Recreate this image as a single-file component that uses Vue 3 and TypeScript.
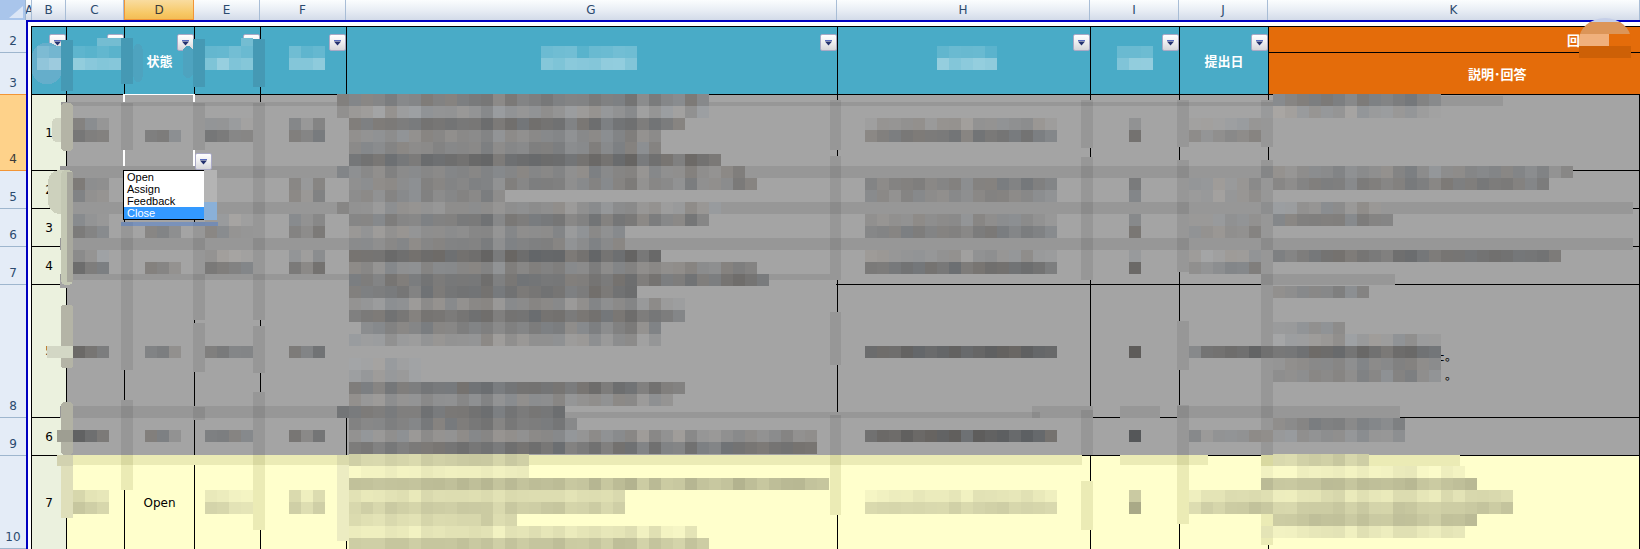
<script setup lang="ts">
interface Shape { x: number; y: number; w: number; h: number; fill: string; rx?: number }

const colLetters = ['A', 'B', 'C', 'D', 'E', 'F', 'G', 'H', 'I', 'J', 'K']
const rowLabels = ['2', '3', '4', '5', '6', '7', '8', '9', '10']
const headers = ['', '', '状態', '', '', '', '', '', '提出日']
const statusOptions = ['Open', 'Assign', 'Feedback', 'Close']
const rows = ['1', '2', '3', '4', '5', '6', '7']
const dataCols = [1, 2, 3, 4, 5, 6, 7, 8, 9]

const shapes: Shape[] = []
const GRAY = '#a4a4a4'
const YELLOW = '#ffffcc'

function hash(a: number, b: number): number {
  const s = Math.sin(a * 12.9898 + b * 78.233) * 43758.5453
  return s - Math.floor(s)
}
function add(x: number, y: number, w: number, h: number, fill: string, rx?: number) {
  shapes.push({ x, y, w, h, fill, rx })
}
// one smear: an opaque cover that hides the grid lines, then a tint on top
function smearCover(x: number, w: number, y0: number, y1: number) {
  if (y0 < 455) add(x, y0, w, Math.min(y1, 455) - y0, GRAY)
  if (y1 > 455) add(x, Math.max(y0, 455), w, y1 - Math.max(y0, 455), YELLOW)
}
function smearTint(x: number, w: number, y0: number, y1: number) {
  if (y0 < 455) add(x, y0, w, Math.min(y1, 455) - y0, 'rgba(0,0,0,.08)')
  if (y1 > 455) add(x, Math.max(y0, 455), w, y1 - Math.max(y0, 455), 'rgba(70,70,0,.11)')
}

const bands: [number, number, number, number][] = [
  [61, 1212, 102, 106], [1273, 230, 96, 106],
  [60, 1510, 166, 178], [66, 1567, 202, 214], [60, 1573, 238, 250],
  [60, 770, 274, 280], [1261, 134, 274, 285],
  [60, 280, 406, 418], [340, 700, 412, 418], [1032, 61, 406, 418],
  [1120, 40, 406, 418], [1177, 223, 406, 418],
  [57, 1025, 455, 465], [1120, 88, 455, 465], [1261, 199, 455, 466],
]
const bars: [number, number, number, number][] = [
  [121, 12, 103, 150], [121, 12, 222, 370], [121, 12, 400, 490],
  [193, 12, 103, 150], [193, 12, 222, 320], [193, 12, 323, 372], [193, 12, 407, 420],
  [253, 12, 103, 320], [253, 12, 326, 373], [253, 12, 392, 530],
  [830, 11, 100, 150], [830, 11, 156, 280], [830, 11, 312, 365], [830, 11, 415, 515],
  [1081, 12, 100, 148], [1081, 12, 157, 280], [1081, 12, 410, 455], [1081, 12, 481, 530],
  [1177, 12, 100, 147], [1177, 12, 160, 272], [1177, 12, 321, 370], [1177, 12, 405, 524],
  [1261, 12, 100, 147], [1261, 12, 160, 545],
]

// hide the grid lines under the large smeared areas
add(326, 95, 510, 189, GRAY)
add(326, 284, 510, 126, GRAY)
add(60, 280, 677, 8, GRAY)
bands.forEach(([x, w, a, b]) => smearCover(x, w, a, b))
bars.forEach(([x, w, a, b]) => smearCover(x, w, a, b))
add(337, 455, 12, 86, '#ececc2')
bands.forEach(([x, w, a, b]) => smearTint(x, w, a, b))
bars.forEach(([x, w, a, b]) => smearTint(x, w, a, b))

// pale rounded blobs over the row-number column
add(48, 170, 25, 44, '#cdd1bd', 12)
add(61, 170, 12, 115, '#c4c8b4', 5)
add(67, 172, 6, 110, '#a8a89e')
add(52, 118, 21, 24, '#d2d6c4', 5)
add(67, 118, 6, 24, '#a8a89e')
add(61, 103, 12, 48, '#b4b4a6', 4)
add(61, 305, 12, 63, '#b4b4a6', 3)
add(47, 346, 26, 12, '#d3d7c5')
add(61, 402, 12, 53, '#b2b2a4', 4)
add(57, 430, 16, 12, '#9e9e92')
add(61, 455, 12, 63, '#dfdfba')
add(57, 455, 16, 11, '#d2d2b0')

type Run = [number, number, number, number]
const runs: Run[] = []
const column = (x0: number, x1: number, list: [number, number][]) =>
  list.forEach(([y, v]) => runs.push([y, x0, x1, v]))

column(73, 109, [[118, 144], [130, 124], [178, 136], [190, 144], [214, 144], [226, 128], [250, 150], [262, 120], [346, 118], [430, 112], [490, 224], [502, 207]])
column(145, 181, [[130, 135], [226, 138], [262, 136], [346, 133], [430, 133]])
column(205, 253, [[118, 152], [130, 128], [214, 154], [226, 142], [250, 156], [262, 128], [346, 128], [430, 128], [490, 236], [502, 218]])
column(289, 325, [[118, 140], [130, 128], [178, 140], [190, 140], [214, 142], [226, 134], [250, 148], [262, 125], [346, 124], [430, 124], [490, 226], [502, 212]])
column(865, 1057, [[118, 150], [130, 127], [178, 133], [190, 140], [214, 144], [226, 132], [250, 152], [262, 120], [346, 104], [430, 104], [490, 236], [502, 216]])
column(1129, 1141, [[118, 136], [130, 112], [178, 120], [190, 128], [214, 136], [226, 112], [250, 144], [262, 96], [346, 85], [430, 85], [490, 200], [502, 168]])
column(1189, 1261, [[118, 154], [130, 138], [178, 150], [190, 150], [214, 150], [226, 144], [250, 154], [262, 138], [346, 133], [430, 133], [490, 232], [502, 214]])

// description column G, line by line
const g: Run[] = [
  [94, 337, 709, 130], [106, 337, 709, 152], [118, 349, 685, 120], [130, 349, 661, 140], [142, 349, 661, 136],
  [154, 349, 721, 114], [166, 337, 745, 136], [178, 349, 757, 136], [190, 349, 505, 136], [202, 337, 721, 146],
  [214, 349, 709, 128], [226, 349, 625, 144], [238, 349, 625, 136], [250, 349, 661, 112], [262, 349, 757, 136],
  [274, 349, 769, 120], [286, 349, 637, 120], [298, 349, 685, 144], [310, 349, 685, 120], [322, 361, 661, 133],
  [334, 349, 661, 150], [358, 349, 421, 156], [370, 349, 421, 152], [382, 349, 685, 120], [394, 349, 673, 144],
  [406, 337, 565, 120], [418, 349, 577, 128], [430, 349, 817, 144], [442, 349, 817, 120],
  [454, 349, 529, 208], [466, 349, 529, 240], [478, 349, 829, 192], [490, 349, 625, 224], [502, 349, 625, 208],
  [514, 349, 517, 216], [526, 349, 697, 232], [538, 349, 709, 200],
]
// answer column K, line by line
const k: Run[] = [
  [94, 1273, 1441, 128], [106, 1261, 1441, 154], [166, 1261, 1570, 138], [178, 1273, 1549, 128], [202, 1261, 1381, 146],
  [214, 1273, 1393, 128], [250, 1273, 1561, 120], [286, 1273, 1369, 136], [322, 1273, 1345, 148], [334, 1273, 1441, 152],
  [346, 1201, 1441, 112], [358, 1273, 1441, 136], [370, 1273, 1441, 136], [418, 1273, 1405, 130], [430, 1201, 1405, 144],
  [454, 1273, 1369, 208], [466, 1261, 1465, 240], [478, 1261, 1477, 192], [490, 1201, 1513, 224], [502, 1201, 1513, 204],
  [514, 1273, 1477, 196], [526, 1261, 1465, 232],
]
runs.push(...g, ...k)

runs.forEach(([y, x0, x1, v]) => {
  for (let x = x0; x < x1; x += 12) {
    const j = (hash(x, 1) - 0.5) * 20 + (hash(x, y) - 0.5) * 10
    const n = Math.max(0, Math.min(255, Math.round(v + j)))
    const tint = Math.round((hash(y, x) - 0.5) * 6)
    const fill = y >= 454
      ? `rgb(${n},${n},${Math.round(n * 0.8)})`
      : `rgb(${n + tint},${n},${n - tint})`
    add(x, y, 12, 12, fill)
  }
})

// smear bleeding out under the list
add(121, 222, 97, 4, 'rgba(60,120,220,.4)')

// header: smears and mosaics over the teal
add(32, 43, 30, 41, '#65aecb', 14)
add(61, 40, 12, 51, '#4599b4')
add(121, 38, 12, 46, '#4599b4')
add(133, 44, 10, 38, '#4ea3bf', 8)
add(193, 39, 12, 48, '#4599b4')
add(183, 46, 10, 32, '#4ea3bf', 6)
add(253, 39, 12, 48, '#4599b4')
const headerMosaic: [number, number][] = [[73, 121], [205, 253], [289, 325], [541, 637], [937, 997], [1117, 1153]]
headerMosaic.forEach(([x0, x1]) => {
  ;[46, 58].forEach((y) => {
    for (let x = x0; x < x1; x += 12) {
      const m = (y === 46 ? 0.16 : 0.36) + (hash(x, y) - 0.5) * 0.14
      const c = (b: number) => Math.round(b + (255 - b) * m)
      add(x, y, 12, 12, `rgb(${c(0x49)},${c(0xab)},${c(0xc7)})`)
    }
  })
})
;[[97, 121], [241, 253]].forEach(([x0, x1]) => {
  for (let x = x0; x < x1; x += 12) add(x, 38, 12, 8, '#74bdd2')
})
;[46, 58].forEach((y) => {
  for (let x = 37; x < 61; x += 12) {
    const m = (y === 46 ? 0.12 : 0.32) + (hash(x, y) - 0.5) * 0.1
    const c = (b: number) => Math.round(b + (255 - b) * m)
    add(x, y, 12, 12, `rgb(${c(0x65)},${c(0xae)},${c(0xcb)})`)
  }
})
</script>

<template>
  <div class="sheet">
    <div class="col-head">
      <div class="corner"><span class="corner-tri"></span></div>
      <div v-for="c in colLetters" :key="c" class="col-label" :class="{ active: c === 'D', narrow: c === 'A' }">{{ c }}</div>
    </div>

    <div class="body">
      <div class="row-head">
        <div v-for="r in rowLabels" :key="r" class="row-label" :class="{ active: r === '4' }">{{ r }}</div>
      </div>

      <div class="canvas">
        <div class="table">
          <div v-for="(h, i) in headers" :key="'h' + i" class="th">
            <span>{{ h }}</span>
            <button class="filter" type="button" aria-label="filter">
              <svg width="9" height="6" viewBox="0 0 9 6"><path d="M1 0h7v1H1z" fill="#5a6cc0" /><path d="M1 1.5h7L4.5 5.5z" fill="#23306e" /></svg>
            </button>
          </div>
          <div class="th-k top"><span>回答</span></div>
          <div class="th-k bottom"><span>説明･回答</span></div>

          <template v-for="r in rows" :key="r">
            <div class="td num">{{ r }}</div>
            <div
              v-for="c in dataCols"
              :key="r + '-' + c"
              class="td"
              :class="{ closed: r !== '7', open: r === '7', selected: r === '1' && c === 2 }"
            >
              <template v-if="r === '7' && c === 2">Open</template>
              <span v-if="r === '5' && c === 9" class="answer-tail">た。<br />　。</span>
              <template v-if="r === '1' && c === 2">
                <button class="filter cell-filter" type="button" aria-label="open list">
                  <svg width="9" height="6" viewBox="0 0 9 6"><path d="M1 0h7v1H1z" fill="#5a6cc0" /><path d="M1 1.5h7L4.5 5.5z" fill="#23306e" /></svg>
                </button>
                <ul class="status-list">
                  <li v-for="o in statusOptions" :key="o" :class="{ picked: o === 'Close' }">{{ o }}</li>
                </ul>
              </template>
            </div>
          </template>
        </div>
      </div>
    </div>

    <svg class="mosaic" width="1640" height="549" viewBox="0 0 1640 549" shape-rendering="crispEdges">
      <defs>
        <clipPath id="dome"><path d="M1579 58V40a26 22 0 0 1 52 0v18z" /></clipPath>
      </defs>
      <rect v-for="(s, i) in shapes" :key="i" :x="s.x" :y="s.y" :width="s.w" :height="s.h" :rx="s.rx" :fill="s.fill" />
      <g clip-path="url(#dome)">
        <rect x="1579" y="18" width="52" height="5" fill="#c5cfe8" />
        <rect x="1579" y="22" width="52" height="12" fill="#dc9558" />
        <rect x="1579" y="34" width="52" height="12" fill="#e46c0a" />
        <rect x="1579" y="34" width="30" height="12" fill="#f0b07c" />
        <rect x="1579" y="46" width="52" height="12" fill="#cd6006" />
      </g>
    </svg>
  </div>
</template>

<style scoped>
.sheet {
  position: relative;
  width: 1640px;
  height: 549px;
  overflow: hidden;
  background: #fff;
  font-family: "DejaVu Sans", sans-serif;
}
.col-head {
  display: grid;
  grid-template-columns: 26px 6px 34px 58px 70px 66px 86px 491px 253px 89px 89px 1fr;
  height: 20px;
}
.corner {
  position: relative;
  background: #a9c5eb;
  border-right: 1px solid #9eb6ce;
}
.corner-tri {
  position: absolute;
  right: 2px;
  bottom: 2px;
  width: 0;
  height: 0;
  border-left: 14px solid transparent;
  border-bottom: 12px solid #dbe6f6;
}
.col-label {
  box-sizing: border-box;
  height: 20px;
  line-height: 20px;
  text-align: center;
  font-size: 12px;
  color: #2b4a6e;
  background: linear-gradient(#fbfdfe, #e9eef5 50%, #d3dbe9);
  border-right: 1px solid #a8bdd6;
  overflow: hidden;
}
.col-label.narrow { text-align: left; text-indent: -1px; }
.col-label.active {
  background: linear-gradient(#f9dca0, #f7c865 70%, #f3bd56);
  border-right: 1px solid #f29536;
  border-left: 1px solid #f29536;
  border-bottom: 1px solid #f29536;
  color: #3a3a3a;
}
.body {
  display: flex;
  height: 529px;
}
.row-head {
  flex: 0 0 26px;
  display: grid;
  grid-template-rows: 33px 42px 76px 38px 38px 38px 133px 38px 1fr;
  background: #e4ecf7;
}
.row-label {
  box-sizing: border-box;
  display: flex;
  align-items: flex-end;
  justify-content: center;
  padding-bottom: 4px;
  font-size: 12px;
  line-height: 14px;
  color: #2b4a6e;
  border-bottom: 1px solid #9eb6ce;
}
.row-label.active {
  background: #fed28a;
  color: #3a3a3a;
  border-top: 1px solid #f29536;
  border-bottom: 1px solid #f29536;
  margin-top: -1px;
}
.canvas {
  flex: 1;
  min-width: 0;
  box-sizing: border-box;
  border-top: 2px solid #0000c0;
  border-left: 2px solid #0000c0;
  padding: 4px 0 0 3px;
  background: #fff;
}
.table {
  display: grid;
  grid-template-columns: 35px 58px 70px 66px 86px 491px 253px 89px 89px 1fr;
  grid-template-rows: 26px 42px 76px 38px 38px 38px 133px 38px 94px;
  border-top: 1px solid #000;
  border-left: 1px solid #000;
}
.th,
.th-k,
.td {
  box-sizing: border-box;
  border-right: 1px solid #000;
  border-bottom: 1px solid #000;
  display: flex;
  align-items: center;
  min-width: 0;
}
.th {
  position: relative;
  grid-row: 1 / span 2;
  justify-content: center;
  background: #49abc7;
  color: #fff;
  font: 700 13px "Noto Sans CJK JP", sans-serif;
}
.th-k {
  grid-column: 10;
  border-right: 0;
  background: #e46c0a;
  color: #fff;
  font: 700 13px "Noto Sans CJK JP", sans-serif;
  white-space: nowrap;
}
.th-k.top { grid-row: 1; padding-left: 298px; }
.th-k.bottom { grid-row: 2; padding-left: 199px; }
.filter {
  position: absolute;
  top: 7px;
  right: 0;
  box-sizing: border-box;
  width: 17px;
  height: 17px;
  padding: 0;
  display: flex;
  align-items: center;
  justify-content: center;
  background: linear-gradient(#ffffff, #f0f0f2 45%, #d6d6da);
  border: 1px solid #a9a9c6;
  border-radius: 2px;
}
.td {
  position: relative;
  justify-content: center;
  font-size: 12px;
  color: #000;
}
.td.num { background: #ebf1de; }
.td.closed { background: #a4a4a4; }
.td.open { background: #ffffcc; }
.td.selected::before {
  content: "";
  position: absolute;
  inset: -1px -1px 0 -2px;
  border-left: 2px solid #fff;
  border-right: 2px solid #fff;
  border-top: 1px solid #fff;
}
.answer-tail {
  position: absolute;
  left: 164px;
  top: 61px;
  font: 12px/19px "Noto Sans CJK JP", sans-serif;
  white-space: nowrap;
}
.cell-filter {
  top: 58px;
  left: 70px;
  right: auto;
  z-index: 4;
}
.status-list {
  position: absolute;
  z-index: 4;
  top: 75px;
  left: -2px;
  box-sizing: border-box;
  width: 94px;
  height: 50px;
  margin: 0;
  padding: 0;
  list-style: none;
  background: #fff;
  border: 1px solid #000;
  font: 11px/12px "Liberation Sans", sans-serif;
  color: #000;
}
.status-list::after {
  content: "";
  position: absolute;
  top: -1px;
  right: -1px;
  bottom: -1px;
  width: 13px;
  background: linear-gradient(#b4b4b4 0 64%, #8ab0d8 64%);
}
.status-list li { padding-left: 3px; height: 12px; }
.status-list li.picked { background: #3399ff; color: #fff; }
.mosaic {
  position: absolute;
  left: 0;
  top: 0;
  z-index: 3;
  pointer-events: none;
}
</style>
